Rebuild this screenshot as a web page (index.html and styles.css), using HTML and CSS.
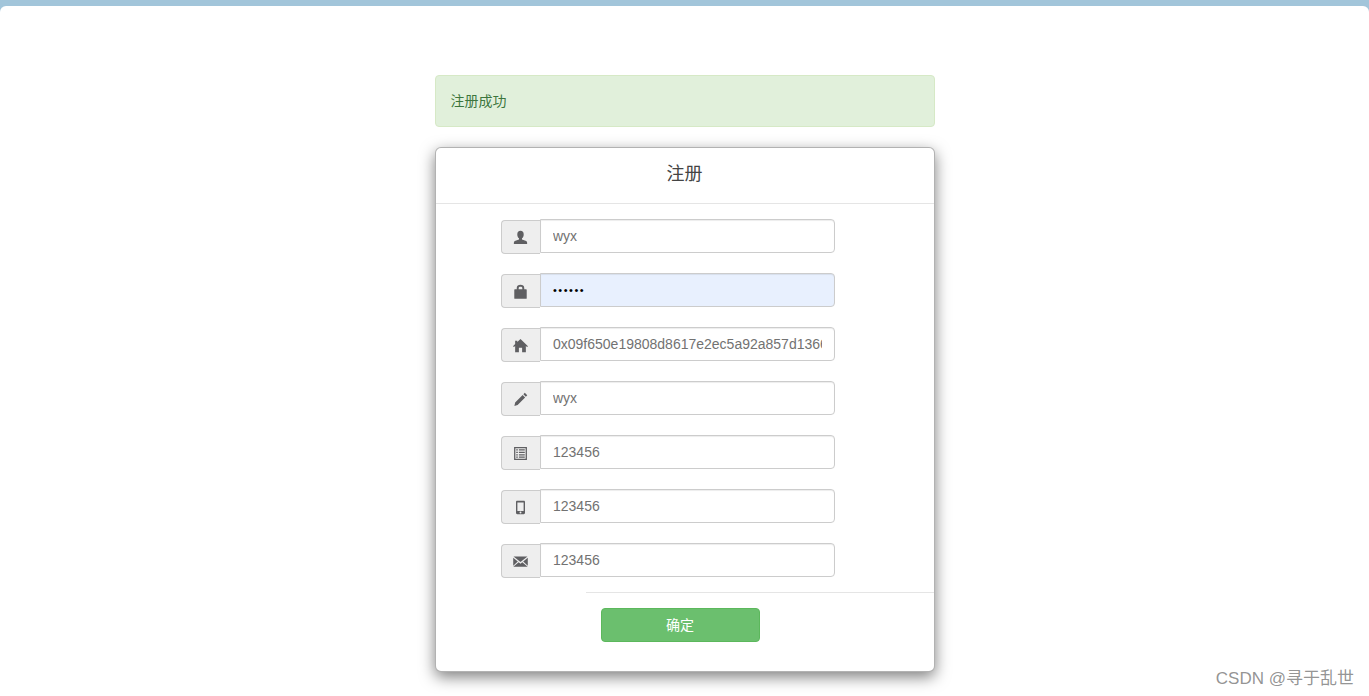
FILE: index.html
```html
<!DOCTYPE html>
<html lang="zh">
<head>
<meta charset="utf-8">
<title>注册</title>
<link rel="stylesheet" href="styles.css">
</head>
<body>
<div class="page">
  <div class="column">
    <div class="alert">注册成功</div>
    <div class="modal">
      <div class="modal-header">注册</div>
      <form class="modal-body">
        <div class="row">
          <span class="addon"><svg class="icon" viewBox="0 0 14 14"><path d="M7 0.8c1.900 0 3 1.400 3 3.300 0 1.500-.6 2.900-1.600 3.600v1.100c1.500.6 4.100 1.100 4.600 2.200.2.500.2 1.200.2 2H.8c0-.8 0-1.500.2-2 .5-1.100 3.100-1.600 4.600-2.200V7.700C4.600 7 4 5.600 4 4.100 4 2.200 5.100.8 7 .8z"/></svg></span>
          <input class="field" type="text" value="wyx">
        </div>
        <div class="row">
          <span class="addon"><svg class="icon" viewBox="0 0 14 14"><path fill-rule="evenodd" d="M3.500 5V3.800C3.500 1.900 5 .8 7 .8s3.500 1.100 3.500 3V5h1.800c.3 0 .5.200.5.500v7.700c0 .3-.2.500-.5.500H1.700c-.3 0-.5-.2-.5-.5V5.500c0-.3.200-.5.500-.5zm1.800 0h3.400V3.800C8.700 2.900 8 2.500 7 2.500s-1.700.4-1.700 1.300z"/></svg></span>
          <input class="field filled" type="password" value="123456">
        </div>
        <div class="row">
          <span class="addon"><svg class="icon" viewBox="0 0 14 14"><path d="M7 1l7 6.600-.9.900L12 7.500v5.800H8.500V9h-3v4.300H2V7.500L.9 8.500 0 7.600 2 5.700V2.500h2v1.300z"/></svg></span>
          <input class="field" type="text" value="0x09f650e19808d8617e2ec5a92a857d1366f9a3c2">
        </div>
        <div class="row">
          <span class="addon"><svg class="icon" viewBox="0 0 14 14"><path d="M11 .8l2.300 2.300-1.300 1.300-2.300-2.300zM9 2.800l2.300 2.300-7 7-3 .9.700-3.200z"/></svg></span>
          <input class="field" type="text" value="wyx">
        </div>
        <div class="row">
          <span class="addon"><svg class="icon" viewBox="0 0 14 14"><path fill-rule="evenodd" d="M1 1h12v12H1zm1.200 1.200v9.600h9.600V2.200zM3 3h1.500v1.200H3zm2.500 0H11v1.200H5.500zM3 5.300h1.500v1.200H3zm2.500 0H11v1.200H5.500zM3 7.600h1.500v1.200H3zm2.500 0H11v1.200H5.500zM3 9.800h1.500V11H3zm2.500 0H11V11H5.500z"/></svg></span>
          <input class="field" type="text" value="123456">
        </div>
        <div class="row">
          <span class="addon"><svg class="icon" viewBox="0 0 14 14"><path fill-rule="evenodd" d="M4 .8h6c.8 0 1.200.5 1.200 1.200v10c0 .8-.4 1.200-1.200 1.200H4c-.8 0-1.200-.4-1.200-1.200V2C2.800 1.300 3.200.8 4 .8zm.1 1.500v7.900h5.800V2.300zM7 10.800a.9.9 0 1 0 0 1.800.9.900 0 0 0 0-1.800z"/></svg></span>
          <input class="field" type="text" value="123456">
        </div>
        <div class="row">
          <span class="addon"><svg class="icon" viewBox="0 0 14 14"><path d="M.5 2.300h13L7 7.500zM.2 3.500L4.500 7 .2 11zm13.600 0V11L9.500 7zM5.300 7.700L7 9l1.700-1.300 5 4.300H.3z"/></svg></span>
          <input class="field" type="text" value="123456">
        </div>
      </form>
      <div class="modal-footer">
        <button class="confirm" type="button">确定</button>
      </div>
    </div>
  </div>
</div>
<div class="watermark">CSDN @寻于乱世</div>
</body>
</html>
```

FILE: styles.css
```css
* { box-sizing: border-box; }
html, body { margin: 0; height: 100%; overflow: hidden; }
body {
  background: #a2c5da;
  padding-top: 6px;
  font-family: "Liberation Sans", "Noto Sans CJK SC", sans-serif;
  color: #333;
  font-size: 14px;
  position: relative;
}
.page {
  height: 690px;
  background: #fff;
  border-radius: 6px 6px 0 0;
  display: flex;
  justify-content: center;
  padding-top: 69px;
}
.column { width: 500px; }
.alert {
  height: 52px;
  padding: 0 15px;
  line-height: 50px;
  background: #e1f0db;
  border: 1px solid #d6e9c6;
  border-radius: 4px;
  color: #3c763d;
  font-size: 14px;
}
.modal {
  margin-top: 20px;
  height: 525px;
  background: #fff;
  border: 1px solid rgba(0,0,0,.3);
  border-radius: 6px;
  box-shadow: 0 5px 15px rgba(0,0,0,.5);
}
.modal-header {
  height: 56px;
  border-bottom: 1px solid #e5e5e5;
  text-align: center;
  font-size: 18px;
  line-height: 53px;
  color: #444;
}
.modal-body {
  padding: 15px 0 0 65px;
  display: flex;
  flex-direction: column;
  gap: 20px;
  height: 388px;
}
.row { display: flex; height: 34px; }
.addon {
  width: 39px;
  height: 34px;
  margin-top: 1px;
  background: #eee;
  border: 1px solid #ccc;
  border-right: 0;
  border-radius: 4px 0 0 4px;
  display: flex;
  align-items: center;
  justify-content: center;
}
.icon { width: 15px; height: 15px; fill: #5f5f62; display: block; }
.field {
  width: 295px;
  height: 34px;
  padding: 6px 12px 6px 12.5px;
  border: 1px solid #ccc;
  border-radius: 0 4px 4px 0;
  background: #fff;
  color: #727272;
  font: 14px "Liberation Sans", sans-serif;
  box-shadow: inset 0 1px 1px rgba(0,0,0,.075);
  outline: none;
}
.field.filled { background: #e8f0fe; color: #000; font-size: 11px; letter-spacing: 1.500px; }
.modal-footer {
  margin-left: 150px;
  height: 80px;
  border-top: 1px solid #e5e5e5;
  padding: 15px 0 0 15px;
}
.confirm {
  display: block;
  width: 159px;
  height: 34px;
  background: #6bbf6e;
  border: 1px solid #5cb85c;
  border-radius: 4px;
  color: #fff;
  font: 14px/30px "Liberation Sans", "Noto Sans CJK SC", sans-serif;
  padding: 0;
}
.watermark {
  position: absolute;
  right: 15px;
  bottom: 5px;
  color: rgba(120,120,120,.8);
  font-size: 17px;
  line-height: 24px;
}
```
